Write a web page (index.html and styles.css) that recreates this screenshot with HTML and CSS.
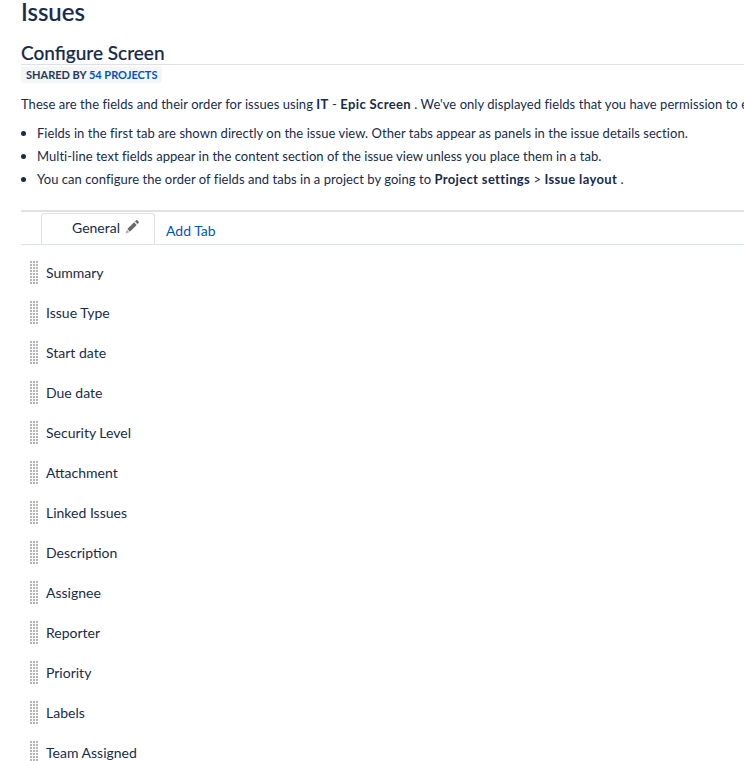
FILE: index.html
```html
<!DOCTYPE html>
<html lang="en">
<head>
<meta charset="utf-8">
<title>Configure Screen</title>
<link rel="stylesheet" href="styles.css">
</head>
<body>
<main class="page">
  <h1 class="title">Issues</h1>
  <header class="screen-head">
    <h2 class="screen-title">Configure Screen</h2>
  </header>
  <div class="shared"><span class="shared-badge">SHARED BY <a class="link" href="#">54 PROJECTS</a></span></div>
  <p class="intro">These are the fields and their order for issues using <b>IT</b> - <b>Epic Screen</b> . We've only displayed fields that you have permission to edit.</p>
  <ul class="notes">
    <li>Fields in the first tab are shown directly on the issue view. Other tabs appear as panels in the issue details section.</li>
    <li>Multi-line text fields appear in the content section of the issue view unless you place them in a tab.</li>
    <li>You can configure the order of fields and tabs in a project by going to <b>Project settings</b> &gt; <b>Issue layout</b> .</li>
  </ul>
  <nav class="tabs">
    <div class="tab">General
      <svg class="pencil" viewBox="0 0 14 14" width="14" height="14" aria-hidden="true"><path d="M11 .4c.4-.4 1-.4 1.400 0l1.200 1.200c.4.4.4 1 0 1.400l-1.100 1.100-2.600-2.600zM9.100 2.300l2.600 2.600-6.800 6.800-2.600-2.600z" fill="#6b6b6b"/><path d="M1.700 9.700l2.600 2.600-3.800 1.200z" fill="#b9aa98"/></svg>
    </div>
    <a class="add-tab" href="#">Add Tab</a>
  </nav>
  <ul class="fields">
    <li class="field"><span class="grip"></span>Summary</li>
    <li class="field"><span class="grip"></span>Issue Type</li>
    <li class="field"><span class="grip"></span>Start date</li>
    <li class="field"><span class="grip"></span>Due date</li>
    <li class="field"><span class="grip"></span>Security Level</li>
    <li class="field"><span class="grip"></span>Attachment</li>
    <li class="field"><span class="grip"></span>Linked Issues</li>
    <li class="field"><span class="grip"></span>Description</li>
    <li class="field"><span class="grip"></span>Assignee</li>
    <li class="field"><span class="grip"></span>Reporter</li>
    <li class="field"><span class="grip"></span>Priority</li>
    <li class="field"><span class="grip"></span>Labels</li>
    <li class="field"><span class="grip"></span>Team Assigned</li>
  </ul>
</main>
</body>
</html>
```
FILE: styles.css
```css
html, body { margin: 0; padding: 0; height: 761px; overflow: hidden; background: #fff; }
body { font-family: "Lato", "Noto Sans", sans-serif; font-size: 14px; color: #172b4d; }
.page { padding-left: 21px; width: 723px; white-space: nowrap; overflow: hidden; }
.title { margin: 0; font-size: 24px; line-height: 24px; font-weight: 500; color: #172b4d; height: 32px; -webkit-text-stroke: .2px #172b4d; }
.screen-head { margin-top: 9px; height: 23px; border-bottom: 1px solid #dfe1e6; }
.screen-title { margin: 0; font-size: 19px; line-height: 24px; font-weight: 500; color: #172b4d; -webkit-text-stroke: .15px #172b4d; }
.shared { height: 17px; }
.shared-badge { display: inline-block; background: #f4f5f7; border-radius: 3px; padding: 0 5px; font-size: 11px; line-height: 16px; font-weight: 700; color: #253858; }
.link { color: #0052cc; text-decoration: none; }
.intro { margin: 12px 0 0; font-size: 13px; letter-spacing: .05px; line-height: 20px; }
.intro b, .notes b { font-weight: 700; letter-spacing: .35px; }
.notes { list-style: none; margin: 8px 0 0; padding: 0; font-size: 13px; letter-spacing: .04px; line-height: 23px; }
.notes li::before { content: ""; display: inline-block; width: 5px; height: 5px; margin-right: 11px; border-radius: 50%; background: #172b4d; vertical-align: 2px; }
.tabs { margin-top: 19px; height: 32px; display: flex; border-top: 2px solid #dfe1e6; border-bottom: 1px solid #dfe1e6; }
.tab { margin: 1px 0 0 20px; width: 114px; box-sizing: border-box; border: 1px solid #dfe1e6; border-bottom: 0; border-radius: 3px 3px 0 0; padding: 4px 0 0 30px; display: flex; align-items: flex-start; gap: 5px; height: 31px; line-height: 20px; }
.pencil { margin-top: 2px; }
.add-tab { margin: 9px 0 0 11px; color: #0052cc; text-decoration: none; line-height: 20px; }
.fields { list-style: none; margin: 8px 0 0; padding: 0; }
.field { height: 40px; display: flex; align-items: center; line-height: 20px; }
.grip { width: 8px; height: 24px; margin: 0 8px 0 9px; flex: none; background-image: radial-gradient(circle at 1px 1px, #b5b5b5 1px, transparent 1px); background-size: 3px 3px; }
```
